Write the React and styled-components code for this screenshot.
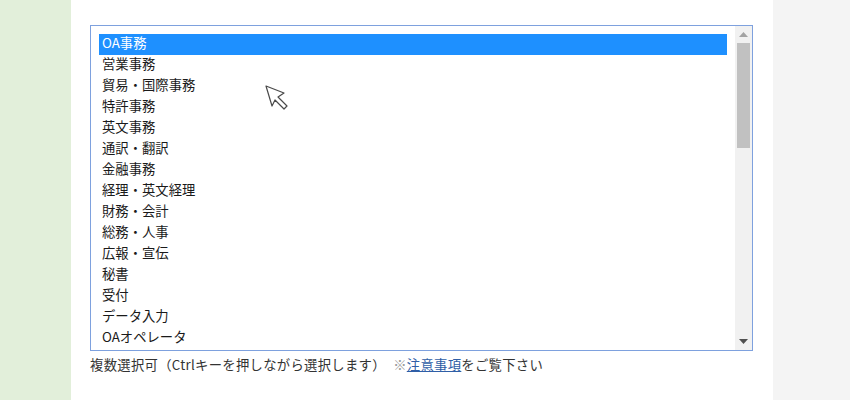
import styled, { createGlobalStyle } from "styled-components";

const GlobalStyle = createGlobalStyle`
  html, body {
    margin: 0;
    padding: 0;
    background: #ffffff;
  }
  body {
    font-family: "Noto Sans CJK JP", "Noto Sans", sans-serif;
  }
`;

const Page = styled.div`
  display: flex;
  height: 400px;
  width: 850px;
  overflow: hidden;
`;

const SideStrip = styled.div`
  background-color: #e2efda;
  width: 71px;
  flex-shrink: 0;
`;

const Main = styled.div`
  background-color: #ffffff;
  width: 702px;
  flex-shrink: 0;
  padding: 25px 0 0 19px;
  box-sizing: border-box;
  position: relative;
`;

const RightStrip = styled.div`
  background-color: #f4f4f4;
  flex: 1;
`;

const ListBox = styled.div`
  border: 1px solid #7ea1de;
  box-sizing: border-box;
  display: flex;
  height: 326px;
  width: 663px;
`;

const Options = styled.div`
  flex: 1;
  padding: 8px 8px 0 8px;
  overflow: hidden;
`;

const Option = styled.div`
  background-color: ${(p) => (p.selected ? "#1e90ff" : "transparent")};
  color: ${(p) => (p.selected ? "#ffffff" : "#1a1a1a")};
  font-size: 13.33px;
  height: 21px;
  line-height: 18px;
  padding-left: 3px;
  white-space: nowrap;
`;

const Scrollbar = styled.div`
  background-color: #f1f1f1;
  display: flex;
  flex-direction: column;
  width: 17px;
`;

const ArrowButton = styled.div`
  align-items: center;
  display: flex;
  height: 17px;
  justify-content: center;
`;

const Thumb = styled.div`
  background-color: #c1c1c1;
  height: 105px;
  margin: 0 2px;
`;

const Track = styled.div`
  flex: 1;
`;

const Caption = styled.p`
  color: #333333;
  font-size: 13.33px;
  letter-spacing: 0.3px;
  margin: 5px 0 0 0;
  line-height: 18px;
  white-space: nowrap;
`;

const Note = styled.span`
  color: #999999;
  margin-left: 4px;
`;

const NoteLink = styled.a`
  color: #2f5ea6;
  text-decoration: underline;
`;

const Cursor = styled.svg`
  position: absolute;
  left: 194px;
  top: 85px;
`;

const items = [
  "OA事務",
  "営業事務",
  "貿易・国際事務",
  "特許事務",
  "英文事務",
  "通訳・翻訳",
  "金融事務",
  "経理・英文経理",
  "財務・会計",
  "総務・人事",
  "広報・宣伝",
  "秘書",
  "受付",
  "データ入力",
  "OAオペレータ",
];

function Triangle({ up }) {
  return (
    <svg width="9" height="5" viewBox="0 0 9 5">
      <polygon
        points={up ? "4.5,0 9,5 0,5" : "0,0 9,0 4.5,5"}
        fill={up ? "#a3a3a3" : "#505050"}
      />
    </svg>
  );
}

function App() {
  return (
    <Page>
      <GlobalStyle />
      <SideStrip />
      <Main>
        <ListBox>
          <Options>
            {items.map((item, i) => (
              <Option key={item} selected={i === 0}>
                {item}
              </Option>
            ))}
          </Options>
          <Scrollbar>
            <ArrowButton>
              <Triangle up />
            </ArrowButton>
            <Thumb />
            <Track />
            <ArrowButton>
              <Triangle />
            </ArrowButton>
          </Scrollbar>
        </ListBox>
        <Caption>
          複数選択可（Ctrlキーを押しながら選択します） <Note>※</Note>
          <NoteLink href="#">注意事項</NoteLink>をご覧下さい
        </Caption>
        <Cursor width="26" height="28" viewBox="-1 -1 26 28">
          <polygon
            points="0,0 18,7 12,11 21,20 18,23 9,14 6,20"
            fill="#ffffff"
            stroke="#4a4a4a"
            strokeWidth="1.2"
            strokeLinejoin="round"
          />
        </Cursor>
      </Main>
      <RightStrip />
    </Page>
  );
}

export default App;
